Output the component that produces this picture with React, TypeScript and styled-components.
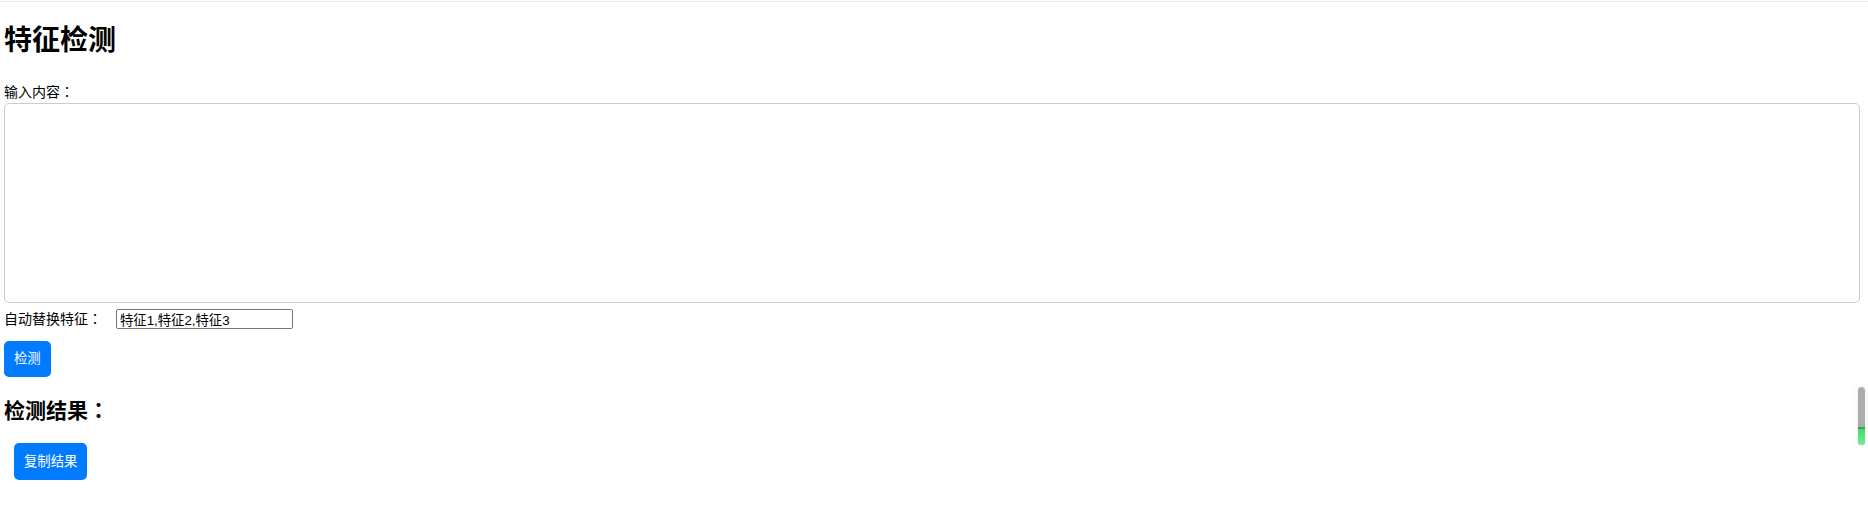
import React, { useState } from 'react';
import styled, { createGlobalStyle } from 'styled-components';

const GlobalStyle = createGlobalStyle`
  html, body {
    margin: 0;
    padding: 0;
    background: #ffffff;
  }
  body {
    font-family: 'Liberation Sans', 'Noto Sans CJK SC', sans-serif;
    font-size: 14px;
    color: #000000;
  }
`;

const TopRule = styled.div`
  height: 1px;
  margin-top: 1px;
  background: #ebebeb;
`;

const Page = styled.div`
  padding: 0 8px 40px 4px;
  display: flex;
  flex-direction: column;
  align-items: flex-start;
`;

const Title = styled.h1`
  margin: 25px 0 0;
  font-size: 28px;
  line-height: 28px;
  font-weight: 700;
`;

// full-width colon centred in its cell, as in the original font
const Colon = styled.span`
  font-family: 'Noto Sans CJK TC', 'Noto Sans CJK SC', sans-serif;
  line-height: 0;
`;

const FieldLabel = styled.label`
  display: block;
  margin-top: 30px;
  font-size: 14px;
  line-height: 14px;
`;

const ContentArea = styled.textarea`
  box-sizing: border-box;
  display: block;
  width: 100%;
  height: 200px;
  margin-top: 4px;
  padding: 6px;
  border: 1px solid #cccccc;
  border-radius: 5px;
  resize: none;
  font-family: 'Liberation Sans', 'Noto Sans CJK SC', sans-serif;
  font-size: 13.33px;
  outline: none;
`;

const OptionRow = styled.div`
  display: flex;
  align-items: center;
  margin-top: 6px;
  height: 20px;
`;

const OptionLabel = styled.label`
  font-size: 14px;
  line-height: 14px;
  width: 112px;
  white-space: nowrap;
`;

const FeatureInput = styled.input`
  box-sizing: border-box;
  width: 177px;
  height: 20px;
  padding: 1px 3px;
  border: 1px solid #767676;
  border-radius: 2px;
  font-family: 'Liberation Sans', 'Noto Sans CJK SC', sans-serif;
  font-size: 13.33px;
  color: #000000;
  outline: none;
`;

const ActionButton = styled.button<{ $tall?: boolean }>`
  box-sizing: border-box;
  height: ${(p) => (p.$tall ? '37px' : '36px')};
  padding: 0 10px;
  border: none;
  border-radius: 5px;
  background: #007bff;
  color: #ffffff;
  font-family: 'Liberation Sans', 'Noto Sans CJK SC', sans-serif;
  font-size: 13.33px;
  line-height: 16px;
  cursor: pointer;
`;

const DetectButton = styled(ActionButton)`
  margin-top: 12px;
`;

const ResultTitle = styled.h2`
  margin: 23px 0 0;
  font-size: 21px;
  line-height: 21px;
  font-weight: 700;
`;

const ResultBox = styled.div`
  margin-top: 22px;
  padding: 0 10px;
`;

const ScrollMeter = styled.div`
  position: fixed;
  left: 1858px;
  top: 387px;
  width: 7px;
  height: 58px;
  border-radius: 4px;
  background: #acacac;
  box-shadow: 0 0 8px rgba(0, 0, 0, 0.08);
  overflow: hidden;
  display: flex;
  flex-direction: column;
  justify-content: flex-end;
`;

const MeterFill = styled.div`
  height: 16px;
  border-top: 2px solid #2fa65a;
  background: linear-gradient(#4cd673, #6ef08f);
`;

export default function App() {
  const [text, setText] = useState('');
  const [features, setFeatures] = useState('特征1,特征2,特征3');

  return (
    <>
      <GlobalStyle />
      <TopRule />
      <Page>
        <Title>特征检测</Title>
        <FieldLabel htmlFor="content">
          输入内容<Colon>：</Colon>
        </FieldLabel>
        <ContentArea id="content" value={text} onChange={(e) => setText(e.target.value)} />
        <OptionRow>
          <OptionLabel htmlFor="features">
            自动替换特征<Colon>：</Colon>
          </OptionLabel>
          <FeatureInput
            id="features"
            value={features}
            onChange={(e) => setFeatures(e.target.value)}
          />
        </OptionRow>
        <DetectButton>检测</DetectButton>
        <ResultTitle>
          检测结果<Colon>：</Colon>
        </ResultTitle>
        <ResultBox>
          <ActionButton $tall>复制结果</ActionButton>
        </ResultBox>
      </Page>
      <ScrollMeter>
        <MeterFill />
      </ScrollMeter>
    </>
  );
}
